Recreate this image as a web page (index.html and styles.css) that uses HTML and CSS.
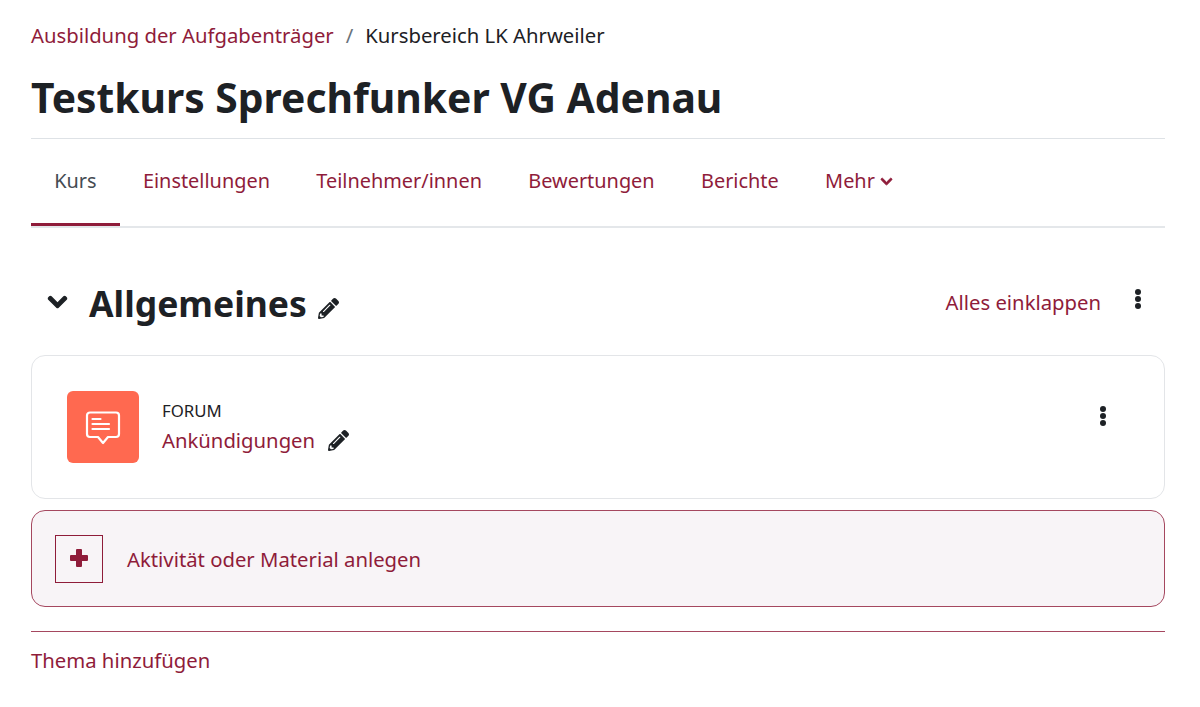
FILE: index.html
```html
<!DOCTYPE html>
<html lang="de">
<head>
    <meta charset="UTF-8">
    <meta name="viewport" content="width=device-width, initial-scale=1.0">
    <title>Testkurs Sprechfunker VG Adenau</title>
    <link rel="stylesheet" href="styles.css">
</head>
<body>
    <svg class="icon-defs" width="0" height="0" aria-hidden="true">
        <symbol id="pencil" viewBox="0 0 512 512"><path d="M497.9 142.1l-46.1 46.1c-4.7 4.7-12.3 4.7-17 0l-111-111c-4.7-4.7-4.7-12.3 0-17l46.1-46.1c18.7-18.7 49.1-18.7 67.9 0l60.1 60.1c18.8 18.7 18.8 49.1 0 67.9zM284.2 99.8L21.6 362.4.4 483.9c-2.9 16.4 11.4 30.6 27.8 27.8l121.5-21.3 262.6-262.6c4.7-4.7 4.7-12.3 0-17l-111-111c-4.8-4.7-12.4-4.7-17.1 0zM124.1 339.9c-5.5-5.5-5.5-14.3 0-19.8l154-154c5.5-5.5 14.3-5.5 19.8 0s5.5 14.3 0 19.8l-154 154c-5.5 5.5-14.3 5.5-19.8 0zM88 424h48v36.3l-64.5 11.3-31.1-31.1L51.7 376H88v48z"/></symbol>
        <symbol id="chevron" viewBox="-30 0 508 512"><path stroke-width="36" stroke-linejoin="round" d="M207.029 381.476L12.686 187.132c-9.373-9.373-9.373-24.569 0-33.941l22.667-22.667c9.357-9.357 24.522-9.375 33.901-.04L224 284.505l154.745-154.021c9.379-9.335 24.544-9.317 33.901.04l22.667 22.667c9.373 9.373 9.373 24.569 0 33.941L240.971 381.476c-9.373 9.372-24.569 9.372-33.942 0z"/></symbol>
        <symbol id="dots" viewBox="0 0 6 20"><circle cx="3" cy="3" r="3"/><circle cx="3" cy="10" r="3"/><circle cx="3" cy="17" r="3"/></symbol>
    </svg>

    <div class="page">
        <nav class="breadcrumb">
            <a href="#">Ausbildung der Aufgabenträger</a>
            <span class="sep">/</span>
            <span class="current">Kursbereich LK Ahrweiler</span>
        </nav>
        <h1>Testkurs Sprechfunker VG Adenau</h1>

        <ul class="tabs">
            <li class="active"><a href="#">Kurs</a></li>
            <li><a href="#">Einstellungen</a></li>
            <li><a href="#">Teilnehmer/innen</a></li>
            <li><a href="#">Bewertungen</a></li>
            <li><a href="#">Berichte</a></li>
            <li><a href="#">Mehr <svg class="tab-caret"><use href="#chevron"/></svg></a></li>
        </ul>

        <div class="section-head">
            <svg class="section-toggle"><use href="#chevron"/></svg>
            <h2>Allgemeines</h2>
            <svg class="section-edit"><use href="#pencil"/></svg>
            <a class="collapse-all" href="#">Alles einklappen</a>
            <svg class="dots section-dots"><use href="#dots"/></svg>
        </div>

        <div class="activity">
            <div class="activity-icon">
                <svg width="36" height="36" viewBox="0 0 36 36" fill="none" stroke="#fff" stroke-width="2.2" stroke-linecap="round" stroke-linejoin="round">
                    <path d="M5 3.500h26a3 3 0 0 1 3 3v18.500a3 3 0 0 1-3 3h-8l-5 6-5-6h-8a3 3 0 0 1-3-3v-18.500a3 3 0 0 1 3-3z"/>
                    <path d="M7.500 10h8M7.500 15h16.500M7.500 20h16.500"/>
                </svg>
            </div>
            <div class="activity-text">
                <div class="activity-type">FORUM</div>
                <div class="activity-name">
                    <a href="#">Ankündigungen</a>
                    <svg class="activity-edit"><use href="#pencil"/></svg>
                </div>
            </div>
            <svg class="dots activity-dots"><use href="#dots"/></svg>
        </div>

        <a class="add-activity" href="#">
            <span class="add-box">
                <svg width="18" height="18" viewBox="0 0 18 18"><path d="M6 1a1 1 0 0 1 1-1h4a1 1 0 0 1 1 1v5h5a1 1 0 0 1 1 1v4a1 1 0 0 1-1 1h-5v5a1 1 0 0 1-1 1h-4a1 1 0 0 1-1-1v-5h-5a1 1 0 0 1-1-1v-4a1 1 0 0 1 1-1h5z"/></svg>
            </span>
            <span>Aktivität oder Material anlegen</span>
        </a>

        <div class="add-topic"><a href="#">Thema hinzufügen</a></div>
    </div>
</body>
</html>
```
FILE: styles.css
```css
* {
    box-sizing: border-box;
}
body {
    margin: 0;
    background: #fff;
    color: #1d2125;
    font-family: "Noto Sans", "Open Sans", sans-serif;
    font-size: 20.3px;
    line-height: 32px;
    overflow: hidden;
}
a {
    color: #8f1c3a;
    text-decoration: none;
}
.icon-defs {
    position: absolute;
}
.page {
    width: 1134px;
    margin-left: 31px;
    padding-top: 19px;
}

/* header */
.breadcrumb {
    display: flex;
    gap: 12px;
    height: 32px;
}
.sep {
    color: #6a737b;
}
h1 {
    margin: 21px 0 0;
    height: 67px;
    font-size: 40.8px;
    line-height: 50px;
    font-weight: 700;
    border-bottom: 1px solid #dee2e6;
}

/* tabs */
.tabs {
    display: flex;
    list-style: none;
    margin: 0;
    padding: 0;
    height: 89px;
    font-size: 19.9px;
    border-bottom: 2px solid #e4e7ea;
}
.tabs li {
    height: 87px;
    padding: 26px 23.2px 0;
    border-bottom: 3px solid transparent;
}
.tabs li.active {
    border-bottom-color: #8f1c3a;
}
.tabs li.active a {
    color: #444b52;
}
.tab-caret {
    width: 13px;
    height: 13px;
    fill: #8f1c3a;
    stroke: #8f1c3a;
}

/* section heading */
.section-head {
    display: flex;
    align-items: center;
    height: 50px;
    margin-top: 50px;
    padding-left: 16px;
}
.section-toggle {
    width: 21px;
    height: 24px;
    margin-right: 21px;
    margin-top: -3px;
    fill: #1d2125;
    stroke: #1d2125;
}
h2 {
    margin: 0;
    font-size: 35.5px;
    line-height: 50px;
    font-weight: 700;
}
.section-edit {
    width: 21px;
    height: 21px;
    margin: 10px 0 0 11px;
    fill: #1d2125;
}
.collapse-all {
    margin-left: auto;
    margin-right: 34px;
    margin-top: -2px;
}
.dots {
    width: 6px;
    height: 20px;
    fill: #1d2125;
}
.section-dots {
    margin-right: 24px;
    margin-top: -8px;
}

/* activity card */
.activity {
    display: flex;
    align-items: center;
    height: 144px;
    margin-top: 27px;
    padding: 0 58px 0 35px;
    border: 1px solid #e3e5e8;
    border-radius: 14px;
}
.activity-icon {
    display: flex;
    align-items: center;
    justify-content: center;
    width: 72px;
    height: 72px;
    background: #ff6950;
    border-radius: 6px;
}
.activity-text {
    margin-left: 23px;
    padding-top: 5px;
}
.activity-type {
    font-size: 16.8px;
    line-height: 24px;
    margin-top: -3px;
    text-transform: uppercase;
}
.activity-name {
    display: flex;
    align-items: center;
    line-height: 34px;
}
.activity-edit {
    width: 21px;
    height: 21px;
    margin-left: 13px;
    fill: #1d2125;
}
.activity-dots {
    margin-left: auto;
    margin-top: -22px;
}

/* add buttons */
.add-activity {
    display: flex;
    align-items: center;
    gap: 24px;
    height: 97px;
    margin-top: 11px;
    padding-left: 23px;
    background: #f8f4f7;
    border: 1px solid #a5475f;
    border-radius: 14px;
}
.add-box {
    display: flex;
    align-items: center;
    justify-content: center;
    width: 48px;
    height: 48px;
    padding-bottom: 2px;
    border: 1px solid #8f1c3a;
}
.add-box svg {
    fill: #8f1c3a;
}
.add-topic {
    margin-top: 24px;
    padding-top: 12px;
    border-top: 1px solid #a5475f;
}
```
